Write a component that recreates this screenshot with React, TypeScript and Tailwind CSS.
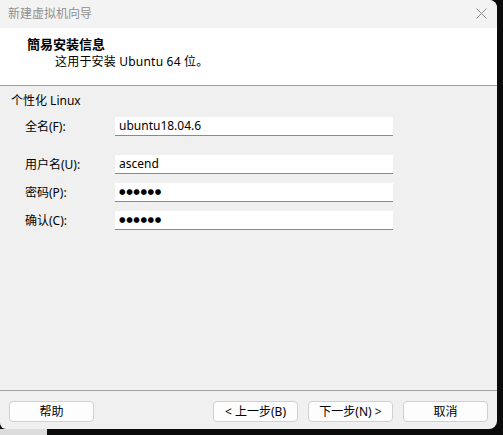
import React from "react";

const font = { fontFamily: '"Noto Sans", "Noto Sans CJK SC", sans-serif' };

function Field({ label, value, secret, className }: { label: string; value: string; secret?: boolean; className?: string }) {
  return (
    <div className={`flex items-center h-[19px] ${className ?? ""}`}>
      <div className="w-[104px] pl-[14px] text-[12px] leading-[16px] text-black">{label}</div>
      <div className="w-[278px] h-[19px] bg-white border-b border-[#8a8a8a] flex items-center pl-[4px]">
        {secret ? (
          <span className="text-[7.5px] leading-[10px] tracking-[0.6px] text-black" style={{ fontFamily: '"DejaVu Sans", sans-serif' }}>
            {value}
          </span>
        ) : (
          <span className="text-[12px] leading-[16px] text-black">{value}</span>
        )}
      </div>
    </div>
  );
}

function Button({ children }: { children: React.ReactNode }) {
  return (
    <button className="w-[85px] h-[21px] bg-[#fdfdfd] border border-[#d0d0d0] rounded-[4px] text-[12px] leading-[16px] text-black flex items-center justify-center">
      {children}
    </button>
  );
}

export default function App() {
  return (
    <div className="w-[503px] h-[435px] bg-[#0b0b0b] flex flex-col" style={font}>
      <div className="w-[497px] h-[429px] bg-[#f0f0f0] rounded-tr-[8px] rounded-br-[8px] rounded-bl-[6px] flex flex-col overflow-hidden">
        {/* title bar */}
        <div className="h-[28px] bg-[#f3f3f3] flex items-center justify-between pl-[8px] pr-[10px]">
          <span className="text-[12px] leading-[16px] text-[#8f8f8f]">新建虚拟机向导</span>
          <svg width="11" height="11" viewBox="0 0 11 11" className="mt-[-2px]">
            <path d="M0.5 0.5 L10.5 10.5 M10.5 0.5 L0.5 10.5" stroke="#8a8a8a" strokeWidth="1" fill="none" />
          </svg>
        </div>

        {/* header */}
        <div className="h-[58px] bg-white border-b border-[#a0a0a0] pt-[8px] pl-[27px]">
          <div className="text-[13px] leading-[17px] font-bold text-black">簡易安装信息</div>
          <div className="mt-[1px] pl-[28px] text-[12px] leading-[16px] text-black tracking-[0.2px]">这用于安装 Ubuntu 64 位。</div>
        </div>

        {/* body */}
        <div className="flex-1 pl-[11px] pt-[7px]">
          <div className="text-[12px] leading-[16px] text-black">个性化 Linux</div>
          <Field className="mt-[8px]" label="全名(F):" value="ubuntu18.04.6" />
          <Field className="mt-[19px]" label="用户名(U):" value="ascend" />
          <Field className="mt-[9px]" label="密码(P):" value="●●●●●●" secret />
          <Field className="mt-[9px]" label="确认(C):" value="●●●●●●" secret />
        </div>

        {/* footer */}
        <div className="h-[39px] border-t border-[#a0a0a0] pt-[10px] px-[9px] flex">
          <Button>帮助</Button>
          <div className="flex-1" />
          <div className="flex gap-[10px]">
            <Button>&lt; 上一步(B)</Button>
            <Button>下一步(N) &gt;</Button>
            <Button>取消</Button>
          </div>
        </div>
      </div>
      <div className="flex-1 flex">
        <div className="w-[47px] bg-[#dcdcdc]" />
      </div>
    </div>
  );
}
